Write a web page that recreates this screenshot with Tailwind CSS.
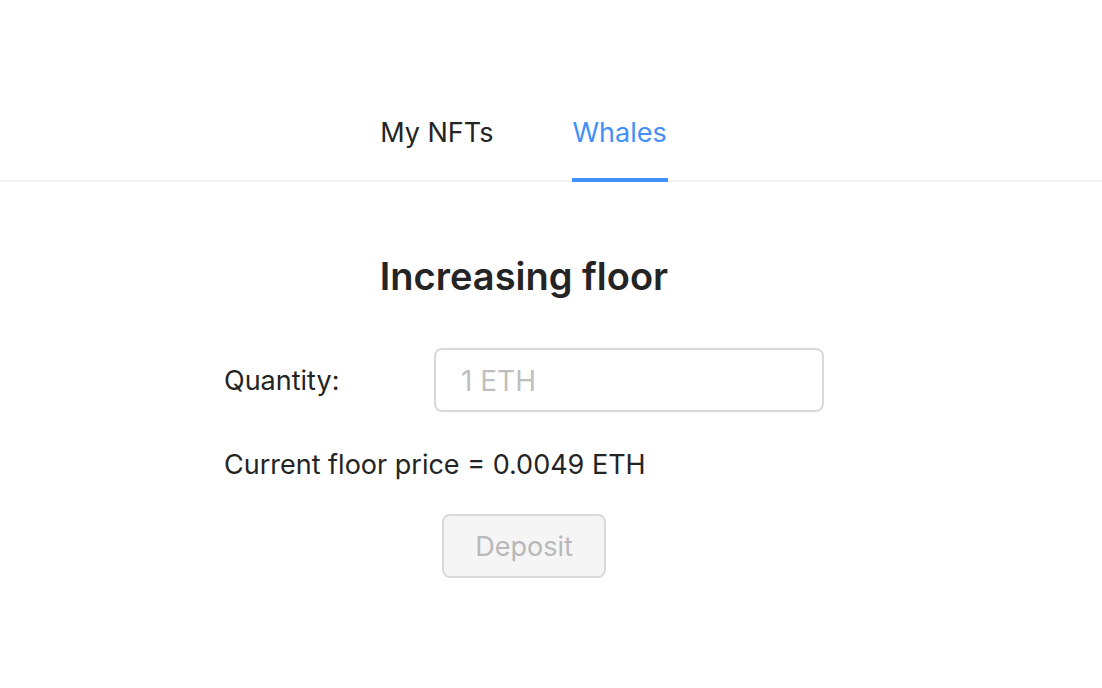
<!DOCTYPE html>
<html lang="en">
<head>
<meta charset="utf-8">
<meta name="viewport" content="width=device-width, initial-scale=1">
<title>Whales</title>
<script src="https://cdn.jsdelivr.net/npm/@tailwindcss/browser@4"></script>
</head>
<body class="min-h-screen bg-white font-['Inter',sans-serif] text-[27px] leading-[44px] text-[#242424]">
<nav class="flex justify-center gap-[78px] border-b-2 border-[#f0f0f0] pt-[111px] pr-[54px]" aria-label="Sections">
<a href="#nfts" class="-mb-0.5 border-b-4 border-transparent pb-[23px]">My NFTs</a>
<a href="#whales" aria-current="page" class="-mb-0.5 border-b-4 border-[#4290f7] px-px pb-[23px] text-[#4290f7]">Whales</a>
</nav>
<main class="pr-[54px] pt-[66px]">
<form class="mx-auto flex max-w-[600px] flex-col">
<h1 class="text-center text-[38px] font-semibold leading-[56px]">Increasing floor</h1>
<div class="mt-11 flex items-center">
<label for="quantity" class="w-[210px] pt-0.5">Quantity:</label>
<input id="quantity" type="text" placeholder="1 ETH" class="h-16 min-w-0 flex-1 rounded-lg border-2 border-[#d9d9d9] px-[25px] pt-0.5 text-[28px] placeholder:text-[#bfbfbf]">
</div>
<p class="mt-[31px]">Current floor price = 0.0049 ETH</p>
<button type="button" disabled class="mt-[27px] h-16 self-center rounded-lg border-2 border-[#d9d9d9] bg-[#f5f5f5] px-[31px] pt-0.5 text-[#b8b8b8]">Deposit</button>
</form>
</main>
</body>
</html>
